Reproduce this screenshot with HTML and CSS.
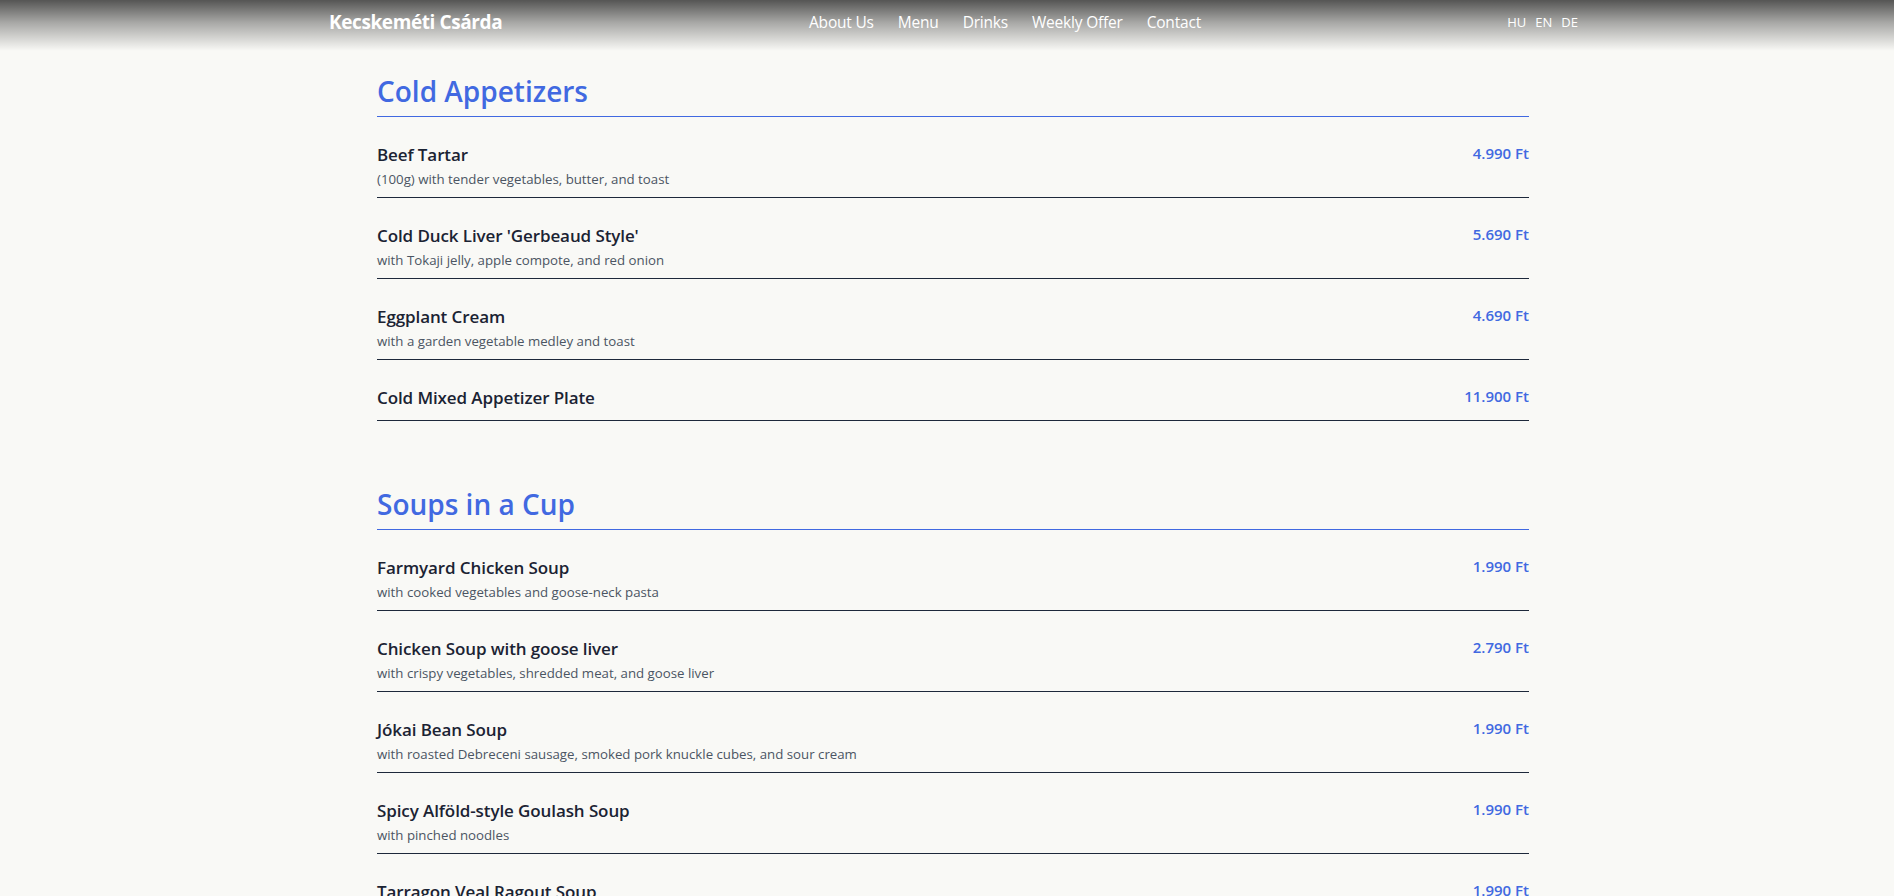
FILE: index.html
```html
<!DOCTYPE html>
<html lang="en">
<head>
<meta charset="utf-8">
<title>Kecskeméti Csárda – Menu</title>
<link rel="stylesheet" href="styles.css">
</head>
<body>
<header class="site-header">
  <div class="header-inner">
    <a class="brand" href="#">Kecskeméti Csárda</a>
    <nav class="main-nav">
      <a href="#">About Us</a>
      <a href="#">Menu</a>
      <a href="#">Drinks</a>
      <a href="#">Weekly Offer</a>
      <a href="#">Contact</a>
    </nav>
    <div class="langs">
      <a href="#">HU</a>
      <a href="#">EN</a>
      <a href="#">DE</a>
    </div>
  </div>
</header>
<main class="menu">
  <section class="menu-section">
    <h2 class="section-title">Cold Appetizers</h2>
    <div class="item">
      <div class="item-text">
        <h3 class="item-name">Beef Tartar</h3>
        <p class="item-desc">(100g) with tender vegetables, butter, and toast</p>
      </div>
      <span class="item-price">4.990 Ft</span>
    </div>
    <div class="item">
      <div class="item-text">
        <h3 class="item-name">Cold Duck Liver 'Gerbeaud Style'</h3>
        <p class="item-desc">with Tokaji jelly, apple compote, and red onion</p>
      </div>
      <span class="item-price">5.690 Ft</span>
    </div>
    <div class="item">
      <div class="item-text">
        <h3 class="item-name">Eggplant Cream</h3>
        <p class="item-desc">with a garden vegetable medley and toast</p>
      </div>
      <span class="item-price">4.690 Ft</span>
    </div>
    <div class="item">
      <div class="item-text">
        <h3 class="item-name">Cold Mixed Appetizer Plate</h3>
      </div>
      <span class="item-price">11.900 Ft</span>
    </div>
  </section>
  <section class="menu-section">
    <h2 class="section-title">Soups in a Cup</h2>
    <div class="item">
      <div class="item-text">
        <h3 class="item-name">Farmyard Chicken Soup</h3>
        <p class="item-desc">with cooked vegetables and goose-neck pasta</p>
      </div>
      <span class="item-price">1.990 Ft</span>
    </div>
    <div class="item">
      <div class="item-text">
        <h3 class="item-name">Chicken Soup with goose liver</h3>
        <p class="item-desc">with crispy vegetables, shredded meat, and goose liver</p>
      </div>
      <span class="item-price">2.790 Ft</span>
    </div>
    <div class="item">
      <div class="item-text">
        <h3 class="item-name">Jókai Bean Soup</h3>
        <p class="item-desc">with roasted Debreceni sausage, smoked pork knuckle cubes, and sour cream</p>
      </div>
      <span class="item-price">1.990 Ft</span>
    </div>
    <div class="item">
      <div class="item-text">
        <h3 class="item-name">Spicy Alföld-style Goulash Soup</h3>
        <p class="item-desc">with pinched noodles</p>
      </div>
      <span class="item-price">1.990 Ft</span>
    </div>
    <div class="item">
      <div class="item-text">
        <h3 class="item-name">Tarragon Veal Ragout Soup</h3>
        <p class="item-desc">with tarragon and sour cream</p>
      </div>
      <span class="item-price">1.990 Ft</span>
    </div>
  </section>
</main>
</body>
</html>
```
FILE: styles.css
```css
* {
  box-sizing: border-box;
}

html, body {
  margin: 0;
  padding: 0;
}

body {
  background: #f9f9f6;
  font-family: "Open Sans", "Noto Sans", "DejaVu Sans", sans-serif;
  color: #1f2937;
}

a {
  color: inherit;
  text-decoration: none;
}

.site-header {
  height: 51px;
  background: linear-gradient(to bottom, rgba(0, 0, 0, 0.66) 0%, rgba(0, 0, 0, 0.32) 45%, rgba(0, 0, 0, 0) 100%);
}

.header-inner {
  display: grid;
  grid-template-columns: 480px auto 1fr;
  align-items: center;
  height: 44px;
  width: 1249px;
  margin-left: calc(50% - 618px);
  color: #ffffff;
}

.brand {
  font-size: 19px;
  font-weight: 700;
  letter-spacing: -0.4px;
  white-space: nowrap;
}

.main-nav {
  display: flex;
  gap: 24px;
  font-size: 15.5px;
  letter-spacing: -0.2px;
}

.langs {
  display: flex;
  justify-content: flex-end;
  gap: 9px;
  font-size: 13px;
}

.menu {
  width: 1152px;
  margin-left: calc(50% - 570px);
  padding-top: 23px;
}

.menu-section + .menu-section {
  margin-top: 66px;
}

.section-title {
  margin: 0;
  font-size: 28px;
  line-height: 34px;
  font-weight: 600;
  color: #4169e1;
  padding-bottom: 8px;
  border-bottom: 1px solid #4169e1;
  letter-spacing: 0;
}

.item {
  display: flex;
  justify-content: space-between;
  align-items: flex-start;
  padding: 26px 0 10px;
  border-bottom: 1px solid #1e293b;
}

.item-name {
  margin: 0;
  font-size: 17px;
  line-height: 24px;
  font-weight: 600;
  color: #1b2333;
  letter-spacing: -0.1px;
}

.item-desc {
  margin: 2px 0 -2px;
  font-size: 13.25px;
  line-height: 20px;
  color: #4b5563;
}

.item-price {
  font-size: 15px;
  line-height: 20px;
  font-weight: 600;
  color: #4169e1;
  white-space: nowrap;
}
```
